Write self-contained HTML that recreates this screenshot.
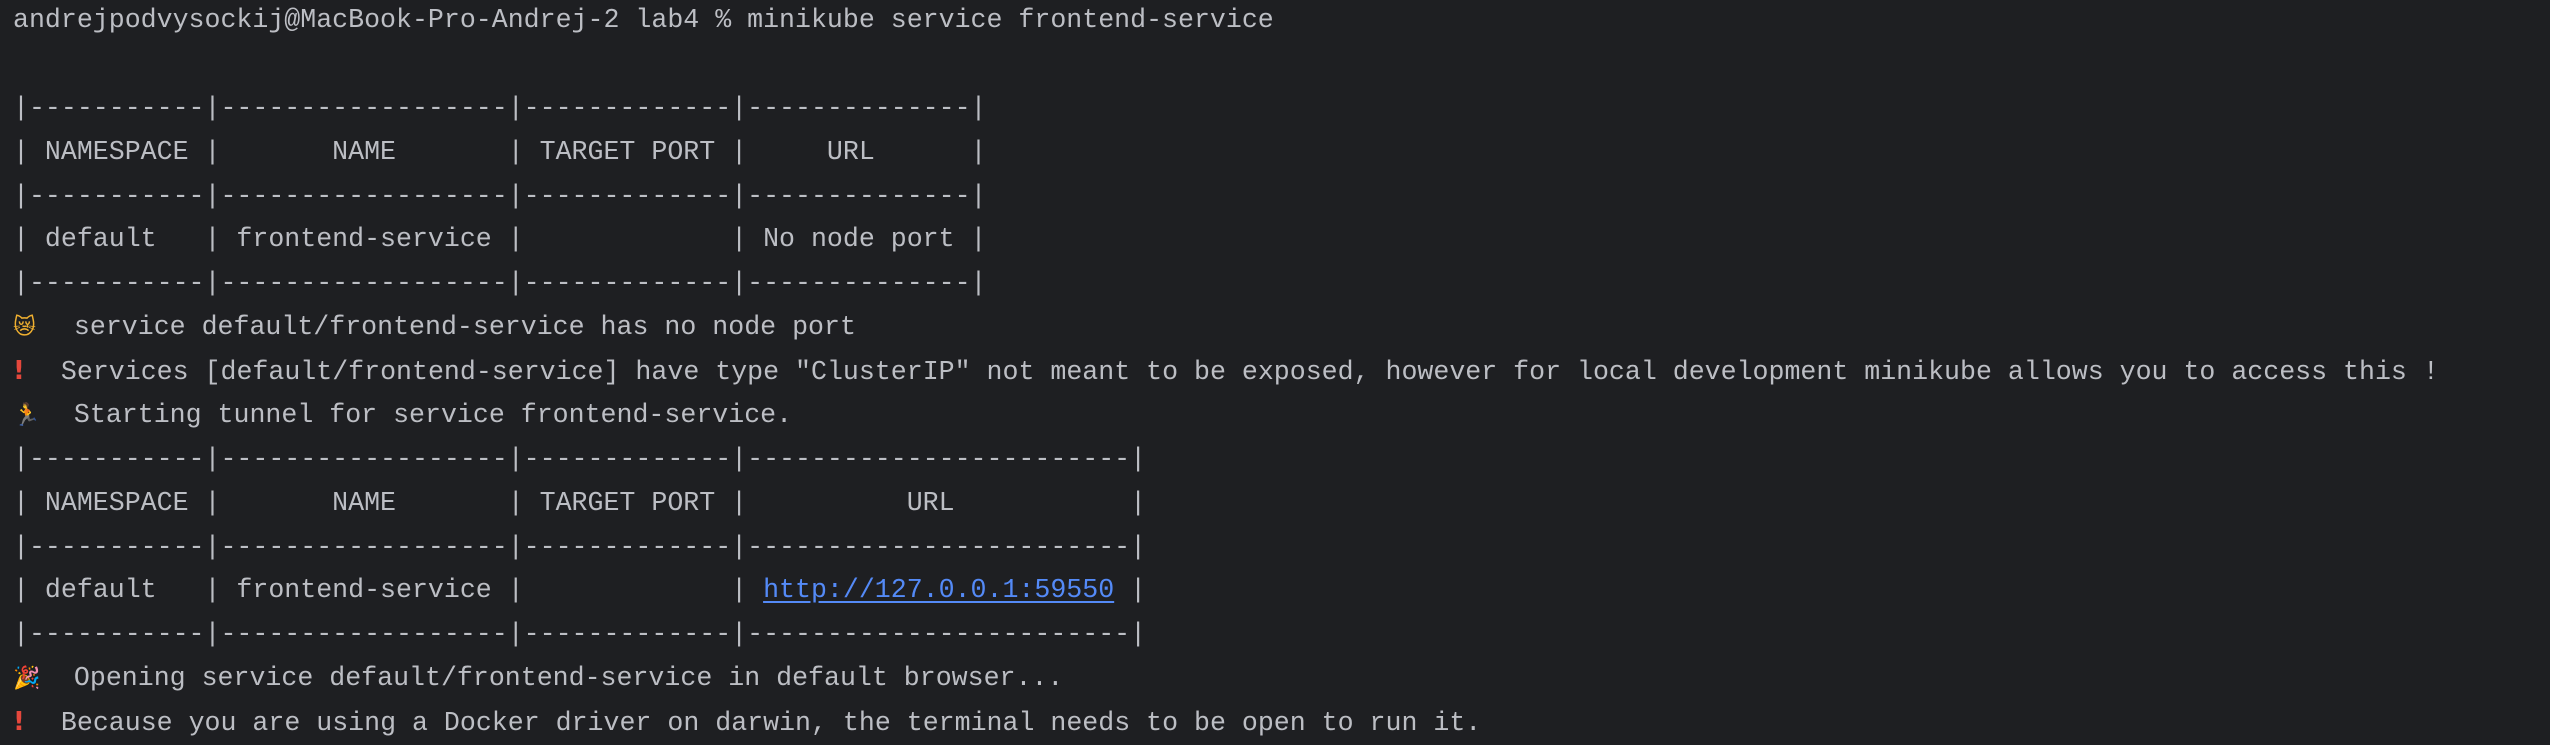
<!DOCTYPE html>
<html><head><meta charset="utf-8"><style>
html,body{margin:0;padding:0;background:#1e1f22;width:2550px;height:742px;overflow:hidden}
.l{position:absolute;left:13px;height:44px;line-height:44px;white-space:pre;font-family:"Liberation Mono","DejaVu Sans Mono",monospace;font-size:26.6px;color:#bcbec4}
.e{display:inline-block;width:29px;font-family:"DejaVu Sans",sans-serif;font-size:22px;text-align:left}
.r{color:#e5473c;font-weight:bold;width:16px;font-size:26px}
a{color:#548af7;text-decoration:underline;text-underline-offset:4px}
</style></head><body>
<div class="l" style="top:-2px">andrejpodvysockij@MacBook-Pro-Andrej-2 lab4 % minikube service frontend-service</div>
<div class="l" style="top:86px">|-----------|------------------|-------------|--------------|</div>
<div class="l" style="top:130px">| NAMESPACE |       NAME       | TARGET PORT |     URL      |</div>
<div class="l" style="top:174px">|-----------|------------------|-------------|--------------|</div>
<div class="l" style="top:217px">| default   | frontend-service |             | No node port |</div>
<div class="l" style="top:261px">|-----------|------------------|-------------|--------------|</div>
<div class="l" style="top:305px"><span class="e" style="color:#f0b030">😿</span>  service default/frontend-service has no node port</div>
<div class="l" style="top:349px"><span class="e r">!</span>  Services [default/frontend-service] have type "ClusterIP" not meant to be exposed, however for local development minikube allows you to access this !</div>
<div class="l" style="top:393px"><span class="e" style="color:#e0a020">🏃</span>  Starting tunnel for service frontend-service.</div>
<div class="l" style="top:437px">|-----------|------------------|-------------|------------------------|</div>
<div class="l" style="top:481px">| NAMESPACE |       NAME       | TARGET PORT |          URL           |</div>
<div class="l" style="top:525px">|-----------|------------------|-------------|------------------------|</div>
<div class="l" style="top:568px">| default   | frontend-service |             | <a>http://127.0.0.1:59550</a> |</div>
<div class="l" style="top:612px">|-----------|------------------|-------------|------------------------|</div>
<div class="l" style="top:656px"><span class="e" style="color:#d0a040">🎉</span>  Opening service default/frontend-service in default browser...</div>
<div class="l" style="top:700px"><span class="e r">!</span>  Because you are using a Docker driver on darwin, the terminal needs to be open to run it.</div>
</body></html>
